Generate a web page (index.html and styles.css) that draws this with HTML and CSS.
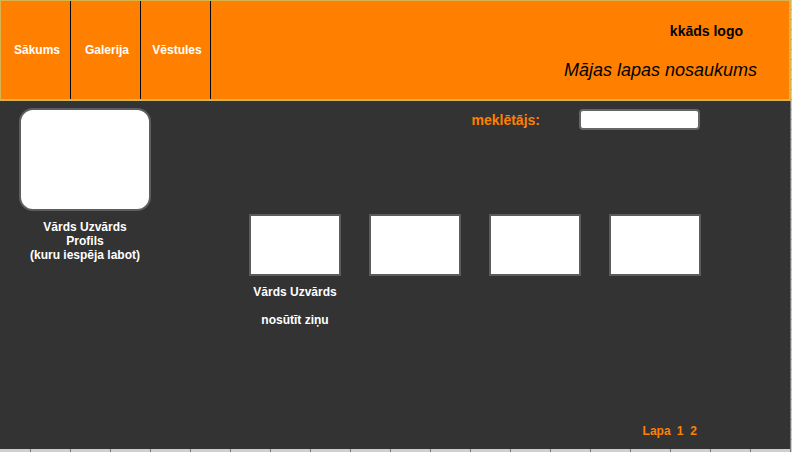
FILE: index.html
```html
<!DOCTYPE html>
<html lang="lv">
<head>
    <meta charset="UTF-8">
    <meta name="viewport" content="width=device-width, initial-scale=1.0">
    <title>Mājas lapas nosaukums</title>
    <link rel="stylesheet" href="styles.css">
</head>
<body>
    <div class="page">
        <header class="header">
            <nav class="nav">
                <a class="nav-item" href="#">Sākums</a>
                <a class="nav-item" href="#">Galerija</a>
                <a class="nav-item" href="#">Vēstules</a>
            </nav>
            <div class="brand">
                <div class="logo">kkāds logo</div>
                <div class="site-title">Mājas lapas nosaukums</div>
            </div>
        </header>

        <div class="main">
            <aside class="sidebar">
                <div class="avatar"></div>
                <div class="profile-text">
                    Vārds Uzvārds<br>
                    Profils<br>
                    (kuru iespēja labot)
                </div>
            </aside>

            <section class="content">
                <div class="search">
                    <label for="search" class="search-label">meklētājs:</label>
                    <input type="text" id="search" class="search-input">
                </div>

                <div class="cards">
                    <div class="card">
                        <div class="thumb"></div>
                        <div class="card-name">Vārds Uzvārds</div>
                        <div class="card-msg">nosūtīt ziņu</div>
                    </div>
                    <div class="card">
                        <div class="thumb"></div>
                    </div>
                    <div class="card">
                        <div class="thumb"></div>
                    </div>
                    <div class="card">
                        <div class="thumb"></div>
                    </div>
                </div>

                <div class="pager">
                    <span>Lapa</span>
                    <a class="page-num first" href="#">1</a>
                    <a class="page-num" href="#">2</a>
                </div>
            </section>
        </div>
    </div>
</body>
</html>
```

FILE: styles.css
```css
body {
    margin: 0;
    font-family: 'Liberation Sans', Arial, sans-serif;
    background-color: #cfcfcf;
    background-image:
        repeating-linear-gradient(90deg, transparent 0 30px, #777 30px 31px, transparent 31px 40px),
        repeating-linear-gradient(0deg, transparent 0 9px, #aaa 9px 10px);
}
.page {
    width: 790px;
    height: 449px;
    background: #333333;
    display: flex;
    flex-direction: column;
}

/* header */
.header {
    box-sizing: border-box;
    height: 101px;
    width: 791px;
    background: #ff8000;
    border: 1px solid #d8b44e;
    border-bottom-width: 2px;
    border-right-width: 2px;
    display: flex;
}
.nav {
    display: flex;
}
.nav-item {
    box-sizing: border-box;
    width: 70px;
    padding-left: 3px;
    border-right: 1px solid #000;
    display: flex;
    align-items: center;
    justify-content: center;
    color: #fff;
    font-size: 12px;
    font-weight: bold;
    text-decoration: none;
}
.brand {
    margin-left: auto;
    padding-top: 22px;
    padding-right: 32px;
    display: flex;
    flex-direction: column;
    align-items: flex-end;
}
.logo {
    font-size: 14px;
    line-height: 16px;
    font-weight: bold;
    color: #000;
    margin-right: 14px;
}
.site-title {
    margin-top: 21px;
    font-size: 18px;
    line-height: 20px;
    font-style: italic;
    color: #000;
}

/* main */
.main {
    flex: 1;
    display: flex;
}
.sidebar {
    width: 170px;
    padding-top: 7px;
    display: flex;
    flex-direction: column;
    align-items: center;
}
.avatar {
    box-sizing: border-box;
    width: 132px;
    height: 103px;
    background: #fff;
    border: 2px solid #5e5e5e;
    border-radius: 14px;
}
.profile-text {
    margin-top: 9px;
    color: #fff;
    font-size: 12px;
    line-height: 14px;
    font-weight: bold;
    text-align: center;
}

.content {
    flex: 1;
    padding: 8px 89px 11px 79px;
    display: flex;
    flex-direction: column;
}
.search {
    display: flex;
    justify-content: flex-end;
    align-items: center;
    gap: 39px;
    margin-right: 1px;
}
.search-label {
    color: #ff8000;
    font-size: 14px;
    line-height: 16px;
    font-weight: bold;
}
.search-input {
    box-sizing: border-box;
    width: 121px;
    height: 21px;
    margin: 0;
    padding: 0 4px;
    background: #fff;
    border: 2px solid #666;
    border-radius: 4px;
}

.cards {
    display: flex;
    gap: 28px;
    margin-top: 84px;
}
.card {
    width: 92px;
    text-align: center;
    color: #fff;
    font-size: 12px;
    line-height: 14px;
    font-weight: bold;
}
.thumb {
    box-sizing: border-box;
    width: 92px;
    height: 62px;
    background: #fff;
    border: 2px solid #5c5c5c;
}
.card-name {
    margin-top: 9px;
    white-space: nowrap;
}
.card-msg {
    margin-top: 14px;
}

.pager {
    margin-top: auto;
    align-self: flex-end;
    margin-right: 4px;
    display: flex;
    color: #ff8000;
    font-size: 12px;
    line-height: 14px;
    font-weight: bold;
}
.page-num {
    color: #ff8000;
    text-decoration: none;
    margin-left: 7px;
}
.page-num.first {
    margin-left: 6px;
}
```
